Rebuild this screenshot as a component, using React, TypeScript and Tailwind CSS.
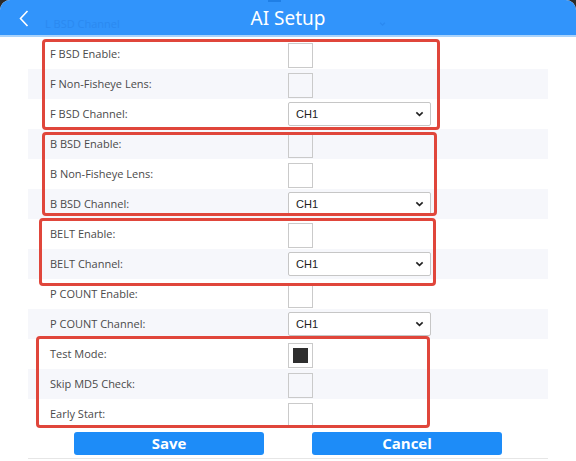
const ROWS: { label: string; kind: "check" | "select"; checked?: boolean }[] = [
  { label: "F BSD Enable:", kind: "check" },
  { label: "F Non-Fisheye Lens:", kind: "check" },
  { label: "F BSD Channel:", kind: "select" },
  { label: "B BSD Enable:", kind: "check" },
  { label: "B Non-Fisheye Lens:", kind: "check" },
  { label: "B BSD Channel:", kind: "select" },
  { label: "BELT Enable:", kind: "check" },
  { label: "BELT Channel:", kind: "select" },
  { label: "P COUNT Enable:", kind: "check" },
  { label: "P COUNT Channel:", kind: "select" },
  { label: "Test Mode:", kind: "check", checked: true },
  { label: "Skip MD5 Check:", kind: "check" },
  { label: "Early Start:", kind: "check" },
];

// highlighted groups drawn over the form
const GROUPS = [
  "left-[42px] top-[39px] w-[398px] h-[91px]",
  "left-[42px] top-[132px] w-[395px] h-[84px]",
  "left-[39px] top-[218px] w-[397px] h-[68px]",
  "left-[36px] top-[336px] w-[394px] h-[92px]",
];

function Chevron({ className }: { className: string }) {
  return (
    <svg className={className} viewBox="0 0 10 6" fill="none">
      <path d="M1.5 1.2 5 4.6 8.5 1.2" stroke="currentColor" strokeWidth="1.8" />
    </svg>
  );
}

function CheckBox({ checked }: { checked?: boolean }) {
  return (
    <div className="w-[25px] h-[25px] mt-[2px] border border-[#cacaca] flex items-center justify-center">
      {checked && <div className="w-[15px] h-[15px] bg-[#2e2e2e]" />}
    </div>
  );
}

function ChannelSelect() {
  return (
    <div className="w-[143px] h-[24px] border border-[#c6c6c6] rounded-[2px] bg-white flex items-center justify-between pl-[7px] pr-[6px] font-['Liberation_Sans',sans-serif] text-[11px] text-[#222]">
      <span>CH1</span>
      <Chevron className="w-[9px] h-[6px] text-[#222]" />
    </div>
  );
}

export default function App() {
  return (
    <div className="relative w-[576px] h-[461px] bg-[#2b2b2b] overflow-hidden font-['Open_Sans',sans-serif]">
      <div className="h-full bg-white rounded-t-[10px] overflow-hidden flex flex-col">
        <header className="relative h-[35px] bg-[#3194fb] flex items-center justify-center shrink-0">
          <div className="absolute left-[268px] top-0 w-[13px] h-[2px] bg-[#1f7fe6]" />
          <svg className="absolute left-[19px] top-[10px] w-[10px] h-[17px]" viewBox="0 0 10 17" fill="none">
            <path d="M8.5 1 1.5 8.5 8.5 16" stroke="white" strokeWidth="1.6" />
          </svg>
          <span className="absolute left-[45px] top-[16px] text-[11px] text-[#2b89f0]">L BSD Channel</span>
          <Chevron className="absolute left-[379px] top-[22px] w-[7px] h-[4px] text-[#2b89f0]" />
          <h1 className="text-white text-[19px] leading-none font-['Noto_Sans',sans-serif] mt-[2px]">AI Setup</h1>
        </header>
        <div className="h-[2px] bg-[#a9d3fb] shrink-0" />

        <div className="mx-[28px] mt-[2px] w-[520px]">
          {ROWS.map((r, i) => (
            <div
              key={r.label}
              className={`h-[30px] flex items-center ${i % 2 === 1 ? "bg-[#f6f7fb]" : "bg-white"}`}
            >
              <span className="w-[260px] pl-[22px] text-[11px] text-[#4a4a4a]">{r.label}</span>
              {r.kind === "check" ? <CheckBox checked={r.checked} /> : <ChannelSelect />}
            </div>
          ))}

          <div className="flex justify-between pl-[46px] pr-[46px] pt-[3px] pb-[3px] border-b border-[#e6e6e6]">
            <button className="w-[190px] h-[23px] rounded-[3px] bg-[#1d8cf8] text-white text-[15px] font-bold leading-none">
              Save
            </button>
            <button className="w-[190px] h-[23px] rounded-[3px] bg-[#1d8cf8] text-white text-[15px] font-bold leading-none">
              Cancel
            </button>
          </div>
        </div>
      </div>

      {GROUPS.map((g) => (
        <div key={g} className={`absolute ${g} border-[3px] border-[#e0463b] rounded-[4px] pointer-events-none`} />
      ))}
    </div>
  );
}
